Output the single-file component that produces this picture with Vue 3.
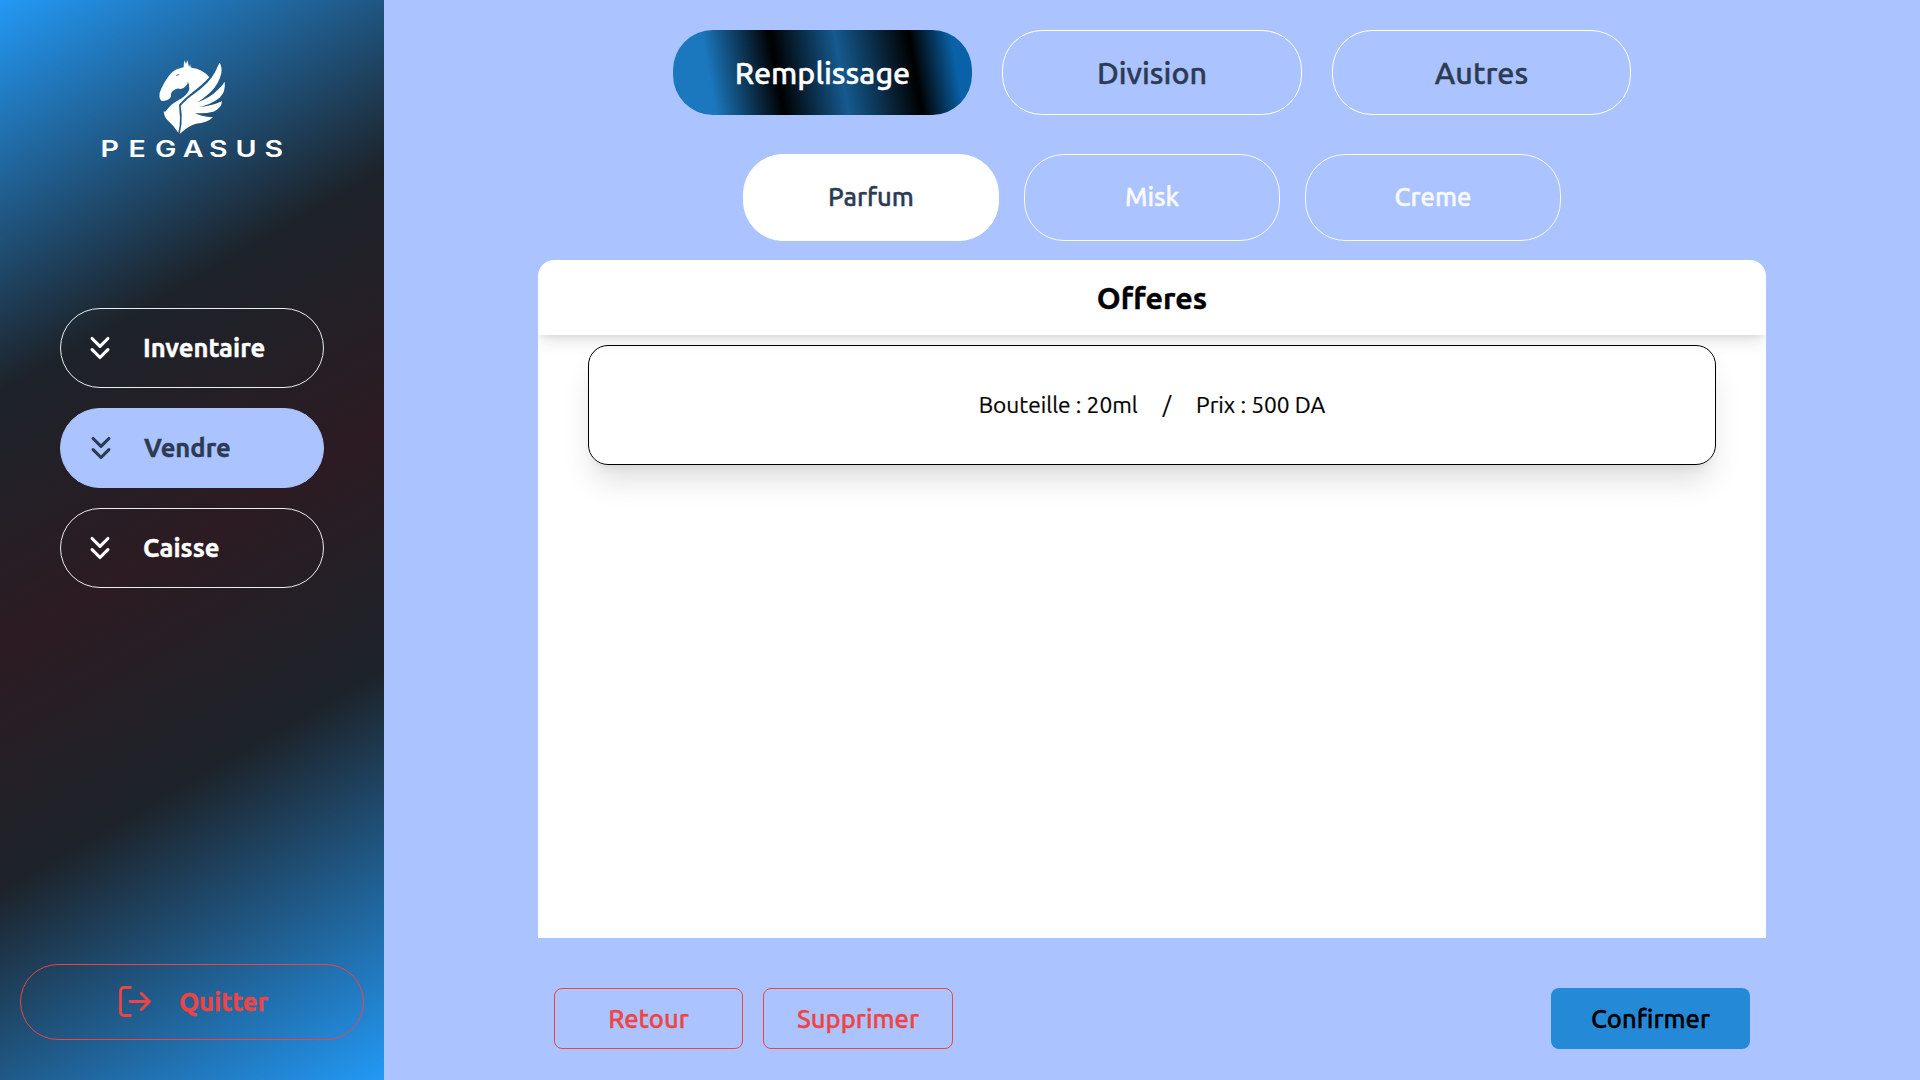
<script setup>
const nav = [{ label: 'Inventaire' }, { label: 'Vendre', active: true }, { label: 'Caisse' }]
const tabs = [{ label: 'Remplissage', active: true }, { label: 'Division' }, { label: 'Autres' }]
const kinds = [{ label: 'Parfum', active: true }, { label: 'Misk' }, { label: 'Creme' }]
</script>

<template>
  <div class="app">
    <aside class="sidebar">
      <svg class="logo" viewBox="0 0 630 360" aria-label="Pegasus">
        <path fill="#fff" d="M281 52 Q281 40 284 31 L288 43 L292 30 Q294 40 297 50 L301 43 Q300 50 304 53 Q338 56 358 82 Q336 106 302 131 Q280 148 267 164 L270 205 Q270 228 265 248 Q252 228 236 214 Q222 202 221 184 Q226 188 230 180 Q242 163 266 150 Q292 137 298 118 Q299 105 294 95 Q291 112 272 117 Q258 112 244 128 Q242 134 243 140 Q235 153 216 153 Q206 148 209 128 Q220 98 241 72 Q256 56 281 52 Z" />
        <path fill="#1f659d" d="M257 77 Q261 71 269 73 Q266 78 257 77 Z" />
        <path fill="#fff" d="M269 252 Q277 222 275 192 L272 168 Q288 148 316 129 Q358 99 375 67 Q383 48 389 38 Q397 52 394 69 Q388 100 362 126 Q342 145 322 157 Q360 144 382 121 Q397 107 404 95 Q408 124 389 143 Q362 164 326 171 Q360 170 396 154 Q395 175 370 185 Q342 192 315 189 Q330 199 369 202 Q350 220 318 221 Q298 225 269 252 Z" />
        <g transform="scale(1.28 1)" class="wordmark">
          <text y="320" x="46.500 110.500 177.500 241.500 301 365.500 431">PEGASUS</text>
        </g>
      </svg>
      <nav class="menu">
        <button v-for="n in nav" :key="n.label" class="menu-item" :class="{ active: n.active }">
          <svg width="38" height="38" viewBox="0 0 24 24" fill="none" stroke="currentColor" stroke-width="2" stroke-linecap="round" stroke-linejoin="round">
            <path d="M7 6l5 5 5-5M7 13l5 5 5-5" />
          </svg>
          <span>{{ n.label }}</span>
        </button>
      </nav>
      <button class="quit">
        <svg width="34" height="34" viewBox="0 0 34 34" fill="none" stroke="currentColor" stroke-width="2.800" stroke-linecap="round" stroke-linejoin="round">
          <path d="M12.500 2.500H6a3.500 3.500 0 0 0-3.500 3.500V27a3.500 3.500 0 0 0 3.500 3.500H12.500M12 16.500H31.500M23.200 8.200l8.300 8.300-8.300 8.300" />
        </svg>
        <span>Quitter</span>
      </button>
    </aside>

    <main class="main">
      <div class="tabs">
        <button v-for="t in tabs" :key="t.label" class="tab" :class="{ active: t.active }">{{ t.label }}</button>
      </div>
      <div class="kinds">
        <button v-for="k in kinds" :key="k.label" class="kind" :class="{ active: k.active }">{{ k.label }}</button>
      </div>
      <section class="panel">
        <h2 class="panel-title">Offeres</h2>
        <div class="offer">
          <span>Bouteille : 20ml</span>
          <span>/</span>
          <span>Prix : 500 DA</span>
        </div>
      </section>
      <footer class="actions">
        <button class="outline">Retour</button>
        <button class="outline wide">Supprimer</button>
        <button class="confirm">Confirmer</button>
      </footer>
    </main>
  </div>
</template>

<style>
body {
  margin: 0;
  overflow: hidden;
}
</style>

<style scoped>
.app {
  display: flex;
  width: 1920px;
  height: 1080px;
  background: #abc4ff;
  font-family: Ubuntu, "Noto Sans", sans-serif;
}
button {
  box-sizing: border-box;
  padding: 0;
  background: none;
  border: 1px solid;
  font-family: inherit;
  font-size: 25.600px;
  font-weight: 500;
  -webkit-text-stroke: 0.4px;
}
.sidebar {
  box-sizing: border-box;
  display: flex;
  flex-direction: column;
  align-items: center;
  width: 384px;
  height: 1080px;
  padding: 50px 20px 40px;
  background: linear-gradient(150deg, #2399f5 0%, #1d232a 30%, #2c1b22 50%, #1d232a 68.500%, #2399f5 100%);
}
.logo {
  width: 210px;
  height: 120px;
  margin-left: 6px;
}
.wordmark {
  fill: #fff;
  font-family: Inter, sans-serif;
  font-size: 67px;
  font-weight: 600;
  text-anchor: middle;
}
.menu {
  display: flex;
  flex-direction: column;
  gap: 20px;
  width: 264px;
  margin-top: 138px;
}
.menu-item {
  display: flex;
  align-items: center;
  gap: 24px;
  height: 80px;
  padding-left: 20px;
  border-color: #e8ecef;
  border-radius: 40px;
  color: #fff;
  font-weight: 700;
}
.menu-item span,
.quit span {
  padding-bottom: 2px;
}
.menu-item.active {
  padding-left: 21px;
  background: #abc4ff;
  border-color: #abc4ff;
  color: #2b3b54;
}
.quit {
  display: flex;
  align-items: center;
  justify-content: center;
  gap: 27px;
  width: 344px;
  height: 76px;
  margin-top: auto;
  padding-left: 2px;
  border-color: #ef4444;
  border-radius: 38px;
  color: #ef4444;
  font-weight: 700;
}
.main {
  display: flex;
  flex-direction: column;
  align-items: center;
  width: 1536px;
  padding-top: 30px;
}
.tabs {
  display: flex;
  gap: 30px;
}
.tab {
  width: 299.500px;
  height: 85px;
  border-color: #fff;
  border-radius: 40px;
  color: #2b3b54;
  font-size: 30.500px;
}
.tab.active {
  border: 0;
  background: linear-gradient(80deg, #1b78be 13.600%, #000 35.500%, #155a90 56%, #000 79.600%, #0962a8 93%);
  color: #fff;
}
.kinds {
  display: flex;
  gap: 25px;
  margin-top: 39px;
}
.kind {
  width: 256px;
  height: 87px;
  padding-bottom: 2px;
  border-color: #f8f9fa;
  border-radius: 40px;
  color: #f8f9fa;
}
.kind.active {
  background: #fff;
  border-color: #fff;
  color: #2b3b54;
}
.panel {
  width: 1228px;
  height: 678px;
  margin-top: 19px;
  background: #fff;
  border-radius: 16px 16px 0 0;
  overflow: hidden;
}
.panel-title {
  height: 75px;
  margin: 0;
  line-height: 77px;
  text-align: center;
  font-size: 30.400px;
  font-weight: 700;
  -webkit-text-stroke: 0.4px;
  box-shadow: 0 10px 15px -3px rgba(0, 0, 0, 0.1), 0 4px 6px -2px rgba(0, 0, 0, 0.07);
}
.offer {
  box-sizing: border-box;
  display: flex;
  align-items: center;
  justify-content: center;
  gap: 25px;
  height: 120px;
  margin: 10px 50px 0;
  padding-bottom: 2px;
  border: 1px solid #000;
  border-radius: 20px;
  font-size: 22.700px;
  -webkit-text-stroke: 0.2px;
  box-shadow: 0 20px 30px -5px rgba(0, 0, 0, 0.13), 0 8px 10px -6px rgba(0, 0, 0, 0.08);
}
.actions {
  display: flex;
  gap: 20px;
  width: 1196px;
  margin-top: 50px;
}
.outline {
  width: 189px;
  height: 61px;
  padding-bottom: 1px;
  border-color: #ef4444;
  border-radius: 8px;
  color: #ef4444;
}
.wide {
  width: 190px;
}
.confirm {
  width: 199px;
  height: 61px;
  margin-left: auto;
  padding-bottom: 1px;
  border: 0;
  border-radius: 8px;
  background: #248ad7;
  color: #000;
}
</style>
